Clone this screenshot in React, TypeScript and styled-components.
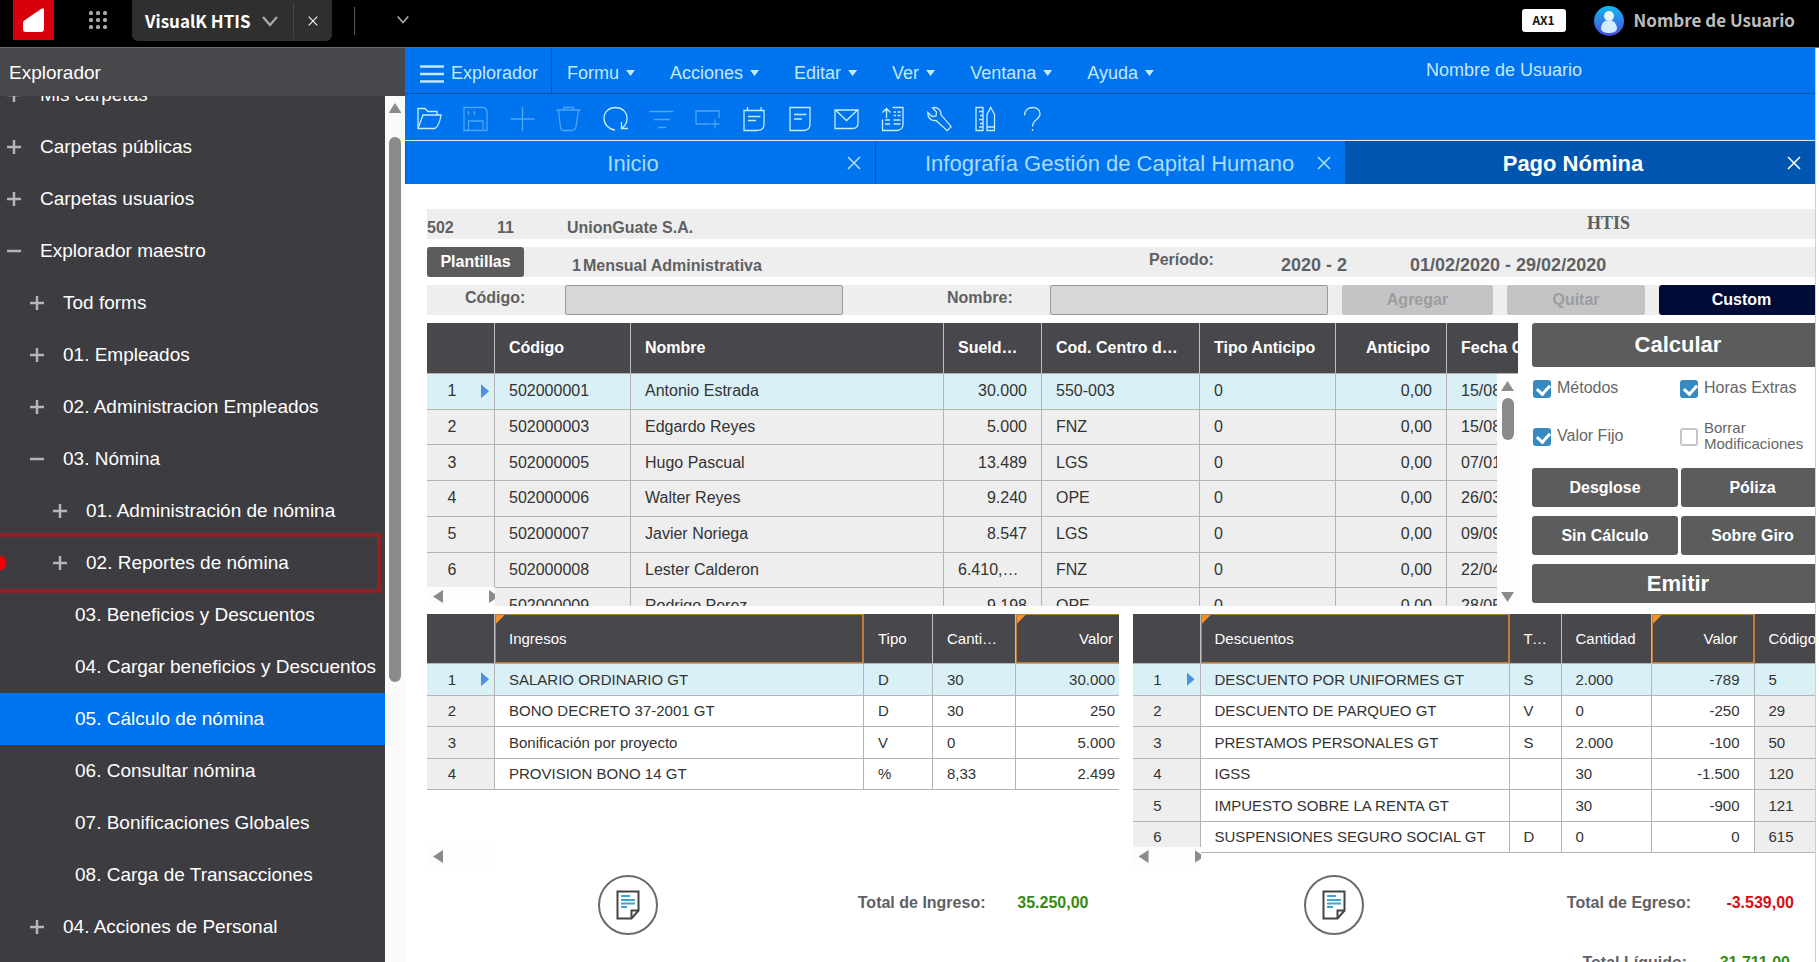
import React from "react";
import styled, { createGlobalStyle, css } from "styled-components";

const GlobalStyle = createGlobalStyle`
  * { box-sizing: border-box; }
  body { margin: 0; background: #fff; font-family: "Liberation Sans", Arial, sans-serif; font-size: 16px; color: #333; }
  button, input { font: inherit; }
  button { border: 0; padding: 0; background: none; color: inherit; cursor: pointer; }
`;

/* ---------- shell ---------- */

const Shell = styled.div`
  display: flex;
  flex-direction: column;
  height: 100vh;
  overflow: hidden;
`;

const TopBar = styled.header`
  display: flex;
  align-items: center;
  flex: none;
  height: 48px;
  padding: 0 24px 0 13px;
  background: #000;
  border-bottom: 1px solid #6b6b6b;
  font-family: "Noto Sans CJK SC", "Noto Sans", sans-serif;
  font-weight: 700;
`;

const Logo = styled.div`
  align-self: flex-start;
  width: 41px;
  height: 40px;
  background: #d9000d;
`;

const AppsButton = styled.button`
  height: 24px;
  margin: -8px 22px 0 32px;
`;

const AppTab = styled.div`
  display: flex;
  align-self: flex-start;
  align-items: center;
  height: 41px;
  background: #2f2f2f;
  border-radius: 0 0 6px 6px;
  color: #fff;
`;

const AppTabName = styled.button`
  display: flex;
  align-items: center;
  justify-content: space-between;
  width: 162px;
  height: 36px;
  padding: 0 15px 0 13px;
  border-right: 1px solid #454545;
  white-space: nowrap;
  font-size: 17px;
`;

const AppTabClose = styled.button`
  display: flex;
  justify-content: center;
  width: 38px;
`;

const TopDivider = styled.div`
  width: 1px;
  height: 28px;
  margin: -6px 42px 0 22px;
  background: #555;
`;

const TopChevron = styled.button`
  height: 12px;
  margin-top: -6px;
  display: flex;
`;

const Badge = styled.span`
  margin: -6px 28px 0 auto;
  width: 44px;
  height: 23px;
  border-radius: 3px;
  background: #fff;
  color: #111;
  text-align: center;
  font-size: 12px;
  line-height: 22px;
`;

const UserName = styled.span`
  margin: -8px 0 0 10px;
  color: #bdbdbd;
  font-size: 17px;
`;

const Avatar = styled.svg`
  margin-top: -5px;
`;

const Body = styled.div`
  display: flex;
  flex: 1;
  min-height: 0;
`;

/* ---------- explorer ---------- */

const Sidebar = styled.aside`
  display: flex;
  flex-direction: column;
  flex: none;
  width: 405px;
  color: #fff;
  font-size: 19px;
`;

const SidebarTitle = styled.h2`
  flex: none;
  height: 48px;
  margin: 0;
  padding-left: 9px;
  background: #48474b;
  font-size: 19px;
  font-weight: 400;
  line-height: 50px;
`;

const SidebarBody = styled.div`
  display: flex;
  flex: 1;
  min-height: 0;
`;

const TreeView = styled.nav`
  position: relative;
  flex: 1;
  overflow: hidden;
  background: #3d3c40;
`;

const Tree = styled.ul`
  list-style: none;
  margin: -27px 0 0;
  padding: 0;
`;

const TreeRow = styled.li<{ $level: number; $leaf?: boolean; $selected?: boolean }>`
  display: flex;
  align-items: center;
  gap: 19px;
  height: 52px;
  padding-left: ${(p) => 7 + p.$level * 23 + (p.$leaf ? 22 : 0)}px;
  background: ${(p) => (p.$selected ? "#0073ee" : "transparent")};
  white-space: nowrap;
`;

const TreeButton = styled.button`
  color: #fff;
`;

const Highlight = styled.div`
  position: absolute;
  left: -4px;
  right: 4px;
  top: 437px;
  height: 60px;
  border: 4px solid #8f2226;
`;

const HighlightDot = styled.div`
  position: absolute;
  left: -7px;
  top: 460px;
  width: 13px;
  height: 14px;
  border-radius: 50%;
  background: #f00000;
  box-shadow: 0 0 2px #f00000;
`;

const VScroll = styled.div<{ $width: number }>`
  display: flex;
  flex-direction: column;
  align-items: center;
  flex: none;
  width: ${(p) => p.$width}px;
  background: #fafafa;
`;

const VThumb = styled.div<{ $height: number }>`
  width: 12px;
  height: ${(p) => p.$height}px;
  margin-top: 7px;
  border-radius: 6px;
  background: #8b8b8b;
`;

const Arrow = styled.span<{ $dir: "up" | "down" | "left" | "right" }>`
  flex: none;
  background: #8b8b8b;
  ${(p) =>
    p.$dir === "up" || p.$dir === "down"
      ? css`width: 13px; height: 10px;`
      : css`width: 10px; height: 13px;`}
  clip-path: ${(p) =>
    ({
      up: "polygon(50% 0, 100% 100%, 0 100%)",
      down: "polygon(0 0, 100% 0, 50% 100%)",
      left: "polygon(0 50%, 100% 0, 100% 100%)",
      right: "polygon(0 0, 100% 50%, 0 100%)",
    })[p.$dir]};
`;

const SidebarArrowBox = styled.div`
  display: flex;
  align-items: flex-end;
  height: 17px;
  margin-bottom: 17px;
`;

/* ---------- workspace ---------- */

const Workspace = styled.main`
  flex: 1;
  min-width: 0;
  margin-right: 3px;
  border-right: 1px solid #cfcfcf;
  overflow: hidden;
  background: #fff;
`;

const MenuBar = styled.nav`
  display: flex;
  height: 46px;
  background: #0073ee;
  border-bottom: 1px solid #0b55ab;
  color: #c5e8ff;
  font-size: 18px;
`;

const ExplorerToggle = styled.button`
  display: flex;
  align-items: center;
  gap: 7px;
  width: 147px;
  padding: 6px 0 0 15px;
  border-right: 1px solid #0b55ab;
`;

const MenuItem = styled.button`
  display: flex;
  align-items: center;
  gap: 7px;
  margin-left: 15px;
  padding: 5px 20px 0 0;
`;

const Caret = styled.span`
  width: 9px;
  height: 6px;
  background: #c5e8ff;
  clip-path: polygon(0 0, 100% 0, 50% 100%);
`;

const MenuUser = styled.span`
  margin-left: auto;
  padding-right: 233px;
  line-height: 45px;
`;

const Toolbar = styled.div`
  height: 47px;
  padding-left: 12px;
  background: #0073ee;
  border-bottom: 1px solid #d5ecff;
`;

const ToolGroup = styled.div`
  display: flex;
  justify-content: space-between;
  align-items: center;
  width: 628px;
  height: 46px;
  padding-top: 3px;
`;

const Tool = styled.button<{ $off?: boolean }>`
  display: flex;
  color: ${(p) => (p.$off ? "#4ba6f8" : "#c6ecff")};
`;

const TabStrip = styled.div`
  display: flex;
  height: 43px;
`;

const DocTab = styled.div<{ $active?: boolean }>`
  display: flex;
  align-items: center;
  flex: 1 1 0;
  min-width: 0;
  background: ${(p) => (p.$active ? "#0055b1" : "#0073ee")};
  color: ${(p) => (p.$active ? "#fff" : "#a9dcff")};
  font-weight: ${(p) => (p.$active ? 700 : 400)};
  border-left: 1px solid #0b55ab;
`;

const DocTabLabel = styled.button`
  flex: 1;
  min-width: 0;
  margin: 0 36px 0 49px;
  padding-top: 2px;
  overflow: visible;
  white-space: nowrap;
  font-size: 22px;
  text-align: center;
`;

const DocTabClose = styled.button`
  display: flex;
  padding-right: 14px;
`;

/* ---------- form ---------- */

const Form = styled.div`
  display: flex;
  flex-direction: column;
  gap: 8px;
  margin-right: -9px;
  padding: 25px 0 0 22px;
`;

const Band = styled.div`
  display: flex;
  align-items: center;
  height: 30px;
  background: #eee;
  color: #5f6063;
  font-weight: 700;
  white-space: nowrap;
`;

const BandText = styled.span<{ $w?: number; $align?: "up" | "down"; $large?: boolean }>`
  flex: none;
  ${(p) => p.$w && css`width: ${p.$w}px;`}
  padding-top: ${(p) => (p.$align === "down" ? (p.$large ? 6 : 8) : 0)}px;
  padding-bottom: ${(p) => (p.$align === "up" ? 4 : 0)}px;
  font-size: ${(p) => (p.$large ? 18 : 16)}px;
`;

const Brand = styled.span`
  width: 237px;
  margin-left: auto;
  padding-bottom: 2px;
  font-family: "Liberation Serif", serif;
  font-size: 18px;
`;

const PeriodGroup = styled.div`
  display: flex;
  align-items: center;
  height: 30px;
  width: 675px;
  margin-left: auto;
`;

const Template = styled.div`
  display: flex;
  gap: 2px;
  margin-left: 48px;
`;

const Field = styled.div<{ $lead: number; $label: number }>`
  display: flex;
  align-items: center;
  margin-left: ${(p) => p.$lead}px;

  label { width: ${(p) => p.$label}px; padding-bottom: 4px; }
`;

const TextBox = styled.input`
  width: 278px;
  height: 30px;
  padding: 0 8px;
  border: 1px solid #989898;
  border-radius: 2px;
  background: #d7d7d7;
`;

const ActionButton = styled.button<{ $kind?: "off" | "navy"; $w?: number; $h?: number; $large?: boolean }>`
  ${(p) => (p.$w ? css`flex: none; width: ${p.$w}px;` : css`flex: 1;`)}
  height: ${(p) => p.$h ?? 30}px;
  border-radius: 3px;
  background: ${(p) => (p.$kind === "off" ? "#c4c4c6" : p.$kind === "navy" ? "#000c35" : "#5c5c5c")};
  color: ${(p) => (p.$kind === "off" ? "#9c9c9f" : "#fff")};
  font-size: ${(p) => (p.$large ? 22 : 16)}px;
  font-weight: 700;
`;

const BandActions = styled.div`
  display: flex;
  gap: 14px;
  flex: 1;
  padding-left: 14px;
`;

/* ---------- grids ---------- */

const Upper = styled.div`
  display: grid;
  grid-template-columns: minmax(0, 1fr) 292px;
  gap: 14px;
  height: 283px;
`;

const GridFrame = styled.div<{ $height: number }>`
  position: relative;
  height: ${(p) => p.$height}px;
  overflow: hidden;
`;

const Grid = styled.table<{ $w: number; $h: number; $size: number; $boldHead?: boolean }>`
  width: ${(p) => p.$w}px;
  height: ${(p) => p.$h}px;
  table-layout: fixed;
  border-collapse: separate;
  border-spacing: 0;
  font-size: ${(p) => p.$size}px;

  thead tr { height: ${(p) => (p.$boldHead ? 51 : 50)}px; }
  th { font-weight: ${(p) => (p.$boldHead ? 700 : 400)}; }
`;

const cell = css<{ $right?: boolean }>`
  overflow: hidden;
  padding: 0 14px;
  border-right: 1px solid #b4b4b4;
  text-align: ${(p) => (p.$right ? "right" : "left")};
  text-overflow: ellipsis;
  white-space: nowrap;
`;

const Th = styled.th<{ $right?: boolean; $marked?: boolean }>`
  ${cell}
  padding-right: ${(p) => (p.$right ? 16 : 14)}px;
  background: #48474b;
  color: #fff;
  border-right-color: #bdbdbd;
  border-bottom: 1px solid #b4b4b4;
  ${(p) =>
    p.$marked &&
    css`
      border-right-color: #bf7b38;
      border-bottom-color: #c9a27c;
      box-shadow: inset 0 0 0 1px #bf7b38;
      background: linear-gradient(135deg, #f7922b 7px, #48474b 8px);
    `}
`;

const HeadCorner = styled.td`
  background: #48474b;
  border-right: 1px solid #bdbdbd;
  border-bottom: 1px solid #b4b4b4;
`;

const Td = styled.td<{ $right?: boolean; $bg: string }>`
  ${cell}
  background: ${(p) => p.$bg};
  border-bottom: 1px solid #b4b4b4;
  color: #333;
`;

const NumCell = styled.td<{ $bg: string }>`
  padding: 0;
  background: ${(p) => p.$bg};
  border-right: 1px solid #b4b4b4;
  border-bottom: 1px solid #b4b4b4;
`;

const NumInner = styled.div`
  display: flex;
  align-items: center;
  justify-content: space-between;
  padding-right: 5px;
`;

const Num = styled.span`
  width: 50px;
  text-align: center;
`;

const Pointer = styled.span`
  width: 8px;
  height: 14px;
  background: #4c92e2;
  clip-path: polygon(0 0, 100% 50%, 0 100%);
`;

const HScroll = styled.div`
  position: absolute;
  left: 0;
  bottom: 0;
  display: flex;
  align-items: center;
  gap: 46px;
  width: 68px;
  height: 19px;
  padding-left: 6px;
  overflow: hidden;
  background: #fdfdfd;
`;

const GridVScroll = styled.div`
  position: absolute;
  right: 0;
  top: 51px;
  bottom: 0;
  display: flex;
  flex-direction: column;
  align-items: center;
  width: 21px;
  padding: 7px 0 4px;
  background: #fdfdfd;

  ${Arrow}:last-child { margin-top: auto; }
`;

/* ---------- right panel ---------- */

const Panel = styled.div`
  display: flex;
  flex-direction: column;
`;

const ButtonRow = styled.div`
  display: flex;
  gap: 3px;

  & + & { margin-top: 9px; }
`;

const Checks = styled.div`
  display: grid;
  grid-template-columns: 147px 1fr;
  grid-template-rows: 48px 48px;
  align-items: center;
  margin: -2px 0 7px 1px;
`;

const CheckItem = styled.div<{ $small?: boolean }>`
  display: flex;
  align-items: center;
  gap: 6px;
  color: #666;

  label {
    font-size: ${(p) => (p.$small ? 15 : 16)}px;
    line-height: 16px;
    padding-bottom: 2px;
  }
`;

const CheckBox = styled.input`
  position: relative;
  appearance: none;
  flex: none;
  width: 18px;
  height: 18px;
  margin: 0;
  border: 2px solid #c6c6c6;
  border-radius: 3px;
  background: #fff;

  &:checked { border-color: #3789c2; background: #3789c2; }
  &:checked::after {
    content: "";
    position: absolute;
    left: 4px;
    top: 0;
    width: 6px;
    height: 10px;
    border: solid #fff;
    border-width: 0 3px 3px 0;
    transform: rotate(42deg);
  }
`;

/* ---------- lower part ---------- */

const Lower = styled.div`
  display: grid;
  grid-template-columns: minmax(0, 1fr) minmax(0, 1fr);
  column-gap: 14px;
`;

const Summary = styled.div`
  display: flex;
  align-items: center;
  padding: 0 30px 0 171px;
  height: 78px;
`;

const NoteButton = styled.button`
  display: flex;
  align-items: center;
  justify-content: center;
  width: 60px;
  height: 60px;
  border: 2px solid #6b6b6b;
  border-radius: 50%;
`;

const Totals = styled.dl`
  display: flex;
  justify-content: flex-end;
  flex: 1;
  margin: 0;
  padding-bottom: 4px;
  font-weight: 700;
`;

const TotalLabel = styled.dt`
  color: #5f6063;
`;

const TotalValue = styled.dd<{ $negative?: boolean }>`
  width: 103px;
  margin: 0;
  text-align: right;
  color: ${(p) => (p.$negative ? "#d90d12" : "#368a12")};
`;

const NetTotal = styled.div`
  grid-column: 2;
  display: flex;
  padding-right: 34px;
  margin-top: 10px;
`;

/* ---------- icons ---------- */

const iconPaths: Record<string, React.ReactNode> = {
  folder: <path d="M.5 21V1.500h7l3 3h9v4M.5 21.500h17c3-2 5-7 6-13.500H5.500L.5 21.500z" />,
  save: <path d="M.5.500h18c3 0 5 2 5 5v18H.5V.500zM5 4v4M11 4v4M5 23V14h14.500v9.500" />,
  plus: <path d="M12 0v24M0 12h24" />,
  trash: <path d="M0 3h24M7.500 3V.500h9.500V3M2 3.500l2 17c.3 2 1.500 3 3 3h8c2.500 0 4-1 4.500-4l2.500-16" />,
  refresh: <path d="M11.500 23C5.500 22.500.5 17.500.5 11.500.5 5 5.500.500 12 .500S23.500 5 23.500 11.500c0 4-2 7.500-5 9.500M18 15v6.500h6.500" />,
  filter: <path d="M0 4.500h24M4 12.500h16.500M8.500 20.500h8" />,
  addWindow: <path d="M23.500 11V4H.5v13H14M19.500 12.500v9M15 17h9" />,
  notes: <path d="M1.500 3.500h20V17c0 4-2.500 6.500-7 6.500h-13V3.500zM5 0v3.500M18.500 0v3.500M5.500 9.500h12.500M5.500 13.500h8" />,
  note: <path d="M1.500.500h20V17c0 4-2.500 6.500-7 6.500h-13V.500zM5.500 7.500h12.500M5.500 12h8" />,
  mail: <path d="M.5 3h23v13c0 3.500-2 5.500-5.500 5.500H.5V3zM1 3l11 10.500L23 3" />,
  sheet: <path d="M11 .500h10.500V17c0 4-2.500 6.500-7 6.500H1V12.500M5 11V1.500M1 5.500l4-4 4 4M12 5h2.500M16 5h3M12 8.500h2.500M16 8.500h3M3.500 13h5M12 13h7M3.500 17h5M12 17h7" />,
  wrench: <path d="M5 .800c4.500-1.300 9 2 8.500 7L23.700 19.700l-4 4L8.500 13.500C3.500 14.500 0 10.500.300 5.500l4.200 4 4-.500.500-4z" />,
  rulers: <path d="M1.500.500h7v23h-7zM4.500 4.500h4M5.500 8.500h3M4.500 12.500h4M5.500 16.500h3M4.500 20h4M12.500 23.500V7.500L16.200.500l3.800 7v16zM12.500 20h7.500" />,
  help: <path d="M4 8.500C4 3.500 7.500.500 12 .500s7.500 2.500 7.500 6.500c0 6-7.500 5-7.500 12.500M12 22v2" />,
};

const Icon = ({ name }: { name: string }) => (
  <svg width="25" height="26" viewBox="-0.500 -1 25 26" fill="none" stroke="currentColor" strokeWidth="1.300" aria-hidden="true">
    {iconPaths[name]}
  </svg>
);

const Cross = ({ size, color }: { size: number; color: string }) => (
  <svg width={size} height={size} viewBox="0 0 14 14" stroke={color} strokeWidth="1.500" aria-hidden="true">
    <path d="M1 1l12 12M13 1L1 13" />
  </svg>
);

const Chevron = ({ w }: { w: number }) => (
  <svg width={w} height={w * 0.75} viewBox="0 0 16 12" fill="none" stroke="#aaa" strokeWidth="2.200" aria-hidden="true">
    <path d="M1 2l7 8 7-8" />
  </svg>
);

const NoteIcon = () => (
  <svg width="24" height="30" viewBox="0 0 24 30" fill="none" aria-hidden="true">
    <path d="M1.500 1.500h21v19l-7 8h-14v-27z" stroke="#444" strokeWidth="2" />
    <path d="M15.500 28v-7.500h7" stroke="#444" strokeWidth="2" />
    <path d="M5 6h9M5 10h14M5 13.500h14M5 17h6" stroke="#38a9d4" strokeWidth="2" />
  </svg>
);

const Expander = ({ open }: { open: boolean }) => (
  <svg width="14" height="14" viewBox="0 0 14 14" stroke="#b5b5b7" strokeWidth="2.500" aria-hidden="true">
    <path d={open ? "M0 7h14" : "M0 7h14M7 0v14"} />
  </svg>
);

/* ---------- data ---------- */

type Node = { label: string; level: number; kind: "open" | "closed" | "leaf"; selected?: boolean };

const tree: Node[] = [
  { label: "Mis carpetas", level: 0, kind: "closed" },
  { label: "Carpetas públicas", level: 0, kind: "closed" },
  { label: "Carpetas usuarios", level: 0, kind: "closed" },
  { label: "Explorador maestro", level: 0, kind: "open" },
  { label: "Tod forms", level: 1, kind: "closed" },
  { label: "01. Empleados", level: 1, kind: "closed" },
  { label: "02. Administracion Empleados", level: 1, kind: "closed" },
  { label: "03. Nómina", level: 1, kind: "open" },
  { label: "01. Administración de nómina", level: 2, kind: "closed" },
  { label: "02. Reportes de nómina", level: 2, kind: "closed" },
  { label: "03. Beneficios y Descuentos", level: 2, kind: "leaf" },
  { label: "04. Cargar beneficios y Descuentos", level: 2, kind: "leaf" },
  { label: "05. Cálculo de nómina", level: 2, kind: "leaf", selected: true },
  { label: "06. Consultar nómina", level: 2, kind: "leaf" },
  { label: "07. Bonificaciones Globales", level: 2, kind: "leaf" },
  { label: "08. Carga de Transacciones", level: 2, kind: "leaf" },
  { label: "04. Acciones de Personal", level: 1, kind: "closed" },
];

const tools: [string, string, boolean?][] = [
  ["folder", "Abrir"],
  ["save", "Guardar", true],
  ["plus", "Nuevo", true],
  ["trash", "Eliminar", true],
  ["refresh", "Actualizar"],
  ["filter", "Filtrar", true],
  ["addWindow", "Agregar ventana", true],
  ["notes", "Agenda"],
  ["note", "Nota"],
  ["mail", "Correo"],
  ["sheet", "Exportar"],
  ["wrench", "Herramientas"],
  ["rulers", "Diseño"],
  ["help", "Ayuda"],
];

type Column = { title: string; width: number; right?: boolean; marked?: boolean; shaded?: boolean };

const employeeColumns: Column[] = [
  { title: "Código", width: 136 },
  { title: "Nombre", width: 313 },
  { title: "Sueldo Base", width: 98, right: true },
  { title: "Cod. Centro de Costo", width: 158 },
  { title: "Tipo Anticipo", width: 136 },
  { title: "Anticipo", width: 111, right: true },
  { title: "Fecha Contrato", width: 160 },
];

const employees = [
  ["502000001", "Antonio Estrada", "30.000", "550-003", "0", "0,00", "15/08/2016"],
  ["502000003", "Edgardo Reyes", "5.000", "FNZ", "0", "0,00", "15/08/2016"],
  ["502000005", "Hugo Pascual", "13.489", "LGS", "0", "0,00", "07/01/2016"],
  ["502000006", "Walter Reyes", "9.240", "OPE", "0", "0,00", "26/03/2016"],
  ["502000007", "Javier Noriega", "8.547", "LGS", "0", "0,00", "09/09/2016"],
  ["502000008", "Lester Calderon", "6.410,256", "FNZ", "0", "0,00", "22/04/2016"],
  ["502000009", "Rodrigo Perez", "9.198", "OPE", "0", "0,00", "28/05/2016"],
];

const incomeColumns: Column[] = [
  { title: "Ingresos", width: 369, marked: true },
  { title: "Tipo", width: 69 },
  { title: "Cantidad", width: 83 },
  { title: "Valor", width: 114, right: true, marked: true },
];

const incomes = [
  ["SALARIO ORDINARIO GT", "D", "30", "30.000"],
  ["BONO DECRETO 37-2001 GT", "D", "30", "250"],
  ["Bonificación por proyecto", "V", "0", "5.000"],
  ["PROVISION BONO 14 GT", "%", "8,33", "2.499"],
];

const deductionColumns: Column[] = [
  { title: "Descuentos", width: 309, marked: true },
  { title: "Tipo", width: 52 },
  { title: "Cantidad", width: 90 },
  { title: "Valor", width: 103, right: true, marked: true },
  { title: "Código", width: 90, shaded: true },
];

const deductions = [
  ["DESCUENTO POR UNIFORMES GT", "S", "2.000", "-789", "5"],
  ["DESCUENTO DE PARQUEO GT", "V", "0", "-250", "29"],
  ["PRESTAMOS PERSONALES GT", "S", "2.000", "-100", "50"],
  ["IGSS", "", "30", "-1.500", "120"],
  ["IMPUESTO SOBRE LA RENTA GT", "", "30", "-900", "121"],
  ["SUSPENSIONES SEGURO SOCIAL GT", "D", "0", "0", "615"],
];

const SELECTED = "#d9f0f7";
const SHADED = "#eeeeee";

type DataGridProps = { columns: Column[]; rows: string[][]; height: number; size: number; boldHead?: boolean; shaded?: boolean };

const DataGrid = ({ columns, rows, height, size, boldHead, shaded }: DataGridProps) => {
  const width = columns.reduce((sum, c) => sum + c.width, 68);
  return (
    <Grid $w={width} $h={height} $size={size} $boldHead={boldHead}>
      <colgroup>
        <col width={68} />
        {columns.map((c) => (
          <col key={c.title} width={c.width} />
        ))}
      </colgroup>
      <thead>
        <tr>
          <HeadCorner />
          {columns.map((c) => (
            <Th key={c.title} scope="col" $right={c.right} $marked={c.marked}>
              {c.title}
            </Th>
          ))}
        </tr>
      </thead>
      <tbody>
        {rows.map((row, i) => (
          <tr key={i}>
            <NumCell $bg={i === 0 ? SELECTED : SHADED}>
              <NumInner>
                <Num>{i + 1}</Num>
                {i === 0 && <Pointer />}
              </NumInner>
            </NumCell>
            {row.map((value, j) => (
              <Td key={j} $right={columns[j].right} $bg={i === 0 ? SELECTED : shaded || columns[j].shaded ? SHADED : "#fff"}>
                {value}
              </Td>
            ))}
          </tr>
        ))}
      </tbody>
    </Grid>
  );
};

export default function App() {
  return (
    <Shell>
      <GlobalStyle />
      <TopBar>
        <Logo>
          <svg width="41" height="40" viewBox="0 0 41 40" aria-hidden="true">
            <path d="M10 23q0-2 2-3L28 9q3-2 3 1v19q0 3-3 3H13q-3 0-3-3z" fill="#fff" />
          </svg>
        </Logo>
        <AppsButton aria-label="Aplicaciones">
          <svg width="24" height="24" viewBox="0 0 24 24" fill="#a8a8a8" aria-hidden="true">
            {[5, 12, 19].map((y) => [5, 12, 19].map((x) => <rect key={x + "-" + y} x={x - 2} y={y - 2} width="4" height="4" rx="1.500" />))}
          </svg>
        </AppsButton>
        <AppTab>
          <AppTabName>
            VisualK HTIS <Chevron w={16} />
          </AppTabName>
          <AppTabClose aria-label="Cerrar">
            <Cross size={10} color="#fff" />
          </AppTabClose>
        </AppTab>
        <TopDivider />
        <TopChevron aria-label="Más">
          <Chevron w={12} />
        </TopChevron>
        <Badge>AX1</Badge>
        <Avatar width="30" height="30" viewBox="0 0 30 30" aria-hidden="true">
          <defs>
            <linearGradient id="ring" x1="0" y1="0" x2="0" y2="1">
              <stop offset="0" stopColor="#12b9f2" />
              <stop offset="1" stopColor="#4a4be0" />
            </linearGradient>
          </defs>
          <circle cx="15" cy="15" r="15" fill="url(#ring)" />
          <circle cx="15" cy="10" r="5" fill="#e6f4ff" />
          <path d="M7 23c0-5 3-9 8-9s8 4 8 9c-1 3-4 4-8 4s-7-1-8-4z" fill="#d3eaff" />
        </Avatar>
        <UserName>Nombre de Usuario</UserName>
      </TopBar>

      <Body>
        <Sidebar>
          <SidebarTitle>Explorador</SidebarTitle>
          <SidebarBody>
            <TreeView aria-label="Explorador">
              <Tree>
                {tree.map((n) => (
                  <TreeRow key={n.label} $level={n.level} $leaf={n.kind === "leaf"} $selected={n.selected}>
                    {n.kind !== "leaf" && <Expander open={n.kind === "open"} />}
                    <TreeButton>{n.label}</TreeButton>
                  </TreeRow>
                ))}
              </Tree>
              <Highlight />
              <HighlightDot />
            </TreeView>
            <VScroll $width={20}>
              <SidebarArrowBox>
                <Arrow $dir="up" />
              </SidebarArrowBox>
              <VThumb $height={545} />
            </VScroll>
          </SidebarBody>
        </Sidebar>

        <Workspace>
          <MenuBar>
            <ExplorerToggle>
              <svg width="24" height="18" viewBox="0 0 24 18" stroke="currentColor" strokeWidth="2.500" aria-hidden="true">
                <path d="M0 1.500h24M0 9h24M0 16.500h24" />
              </svg>
              Explorador
            </ExplorerToggle>
            {["Formu", "Acciones", "Editar", "Ver", "Ventana", "Ayuda"].map((m) => (
              <MenuItem key={m}>
                {m} <Caret />
              </MenuItem>
            ))}
            <MenuUser>Nombre de Usuario</MenuUser>
          </MenuBar>
          <Toolbar>
            <ToolGroup>
              {tools.map(([name, label, off]) => (
                <Tool key={name} aria-label={label} $off={off}>
                  <Icon name={name} />
                </Tool>
              ))}
            </ToolGroup>
          </Toolbar>
          <TabStrip>
            {["Inicio", "Infografía Gestión de Capital Humano", "Pago Nómina"].map((t, i) => (
              <DocTab key={t} $active={i === 2}>
                <DocTabLabel>{t}</DocTabLabel>
                <DocTabClose aria-label="Cerrar">
                  <Cross size={14} color={i === 2 ? "#fff" : "#b5e1ff"} />
                </DocTabClose>
              </DocTab>
            ))}
          </TabStrip>

          <Form>
            <Band>
              <BandText $w={70} $align="down">502</BandText>
              <BandText $w={70} $align="down">11</BandText>
              <BandText $align="down">UnionGuate S.A.</BandText>
              <Brand>HTIS</Brand>
            </Band>
            <Band>
              <ActionButton $w={97}>Plantillas</ActionButton>
              <Template>
                <BandText $align="down">1</BandText>
                <BandText $align="down">Mensual Administrativa</BandText>
              </Template>
              <PeriodGroup>
                <BandText $w={132} $align="up">Período:</BandText>
                <BandText $w={129} $align="down" $large>2020 - 2</BandText>
                <BandText $align="down" $large>01/02/2020 - 29/02/2020</BandText>
              </PeriodGroup>
            </Band>
            <Band>
              <Field $lead={38} $label={100}>
                <label htmlFor="codigo">Código:</label>
                <TextBox id="codigo" />
              </Field>
              <Field $lead={104} $label={103}>
                <label htmlFor="nombre">Nombre:</label>
                <TextBox id="nombre" />
              </Field>
              <BandActions>
                <ActionButton $w={151} $kind="off">Agregar</ActionButton>
                <ActionButton $w={138} $kind="off">Quitar</ActionButton>
                <ActionButton $kind="navy">Custom</ActionButton>
              </BandActions>
            </Band>

            <Upper>
              <GridFrame $height={283}>
                <DataGrid columns={employeeColumns} rows={employees} height={301} size={16} boldHead shaded />
                <GridVScroll>
                  <Arrow $dir="up" />
                  <VThumb $height={42} />
                  <Arrow $dir="down" />
                </GridVScroll>
                <HScroll>
                  <Arrow $dir="left" />
                  <Arrow $dir="right" />
                </HScroll>
              </GridFrame>
              <Panel>
                <ButtonRow>
                  <ActionButton $h={44} $large>Calcular</ActionButton>
                </ButtonRow>
                <Checks>
                  <CheckItem>
                    <CheckBox type="checkbox" id="metodos" defaultChecked />
                    <label htmlFor="metodos">Métodos</label>
                  </CheckItem>
                  <CheckItem>
                    <CheckBox type="checkbox" id="horas" defaultChecked />
                    <label htmlFor="horas">Horas Extras</label>
                  </CheckItem>
                  <CheckItem>
                    <CheckBox type="checkbox" id="fijo" defaultChecked />
                    <label htmlFor="fijo">Valor Fijo</label>
                  </CheckItem>
                  <CheckItem $small>
                    <CheckBox type="checkbox" id="borrar" />
                    <label htmlFor="borrar">
                      Borrar
                      <br />
                      Modificaciones
                    </label>
                  </CheckItem>
                </Checks>
                <ButtonRow>
                  <ActionButton $w={146} $h={39}>Desglose</ActionButton>
                  <ActionButton $h={39}>Póliza</ActionButton>
                </ButtonRow>
                <ButtonRow>
                  <ActionButton $w={146} $h={39}>Sin Cálculo</ActionButton>
                  <ActionButton $h={39}>Sobre Giro</ActionButton>
                </ButtonRow>
                <ButtonRow>
                  <ActionButton $h={39} $large>Emitir</ActionButton>
                </ButtonRow>
              </Panel>
            </Upper>

            <Lower>
              <GridFrame $height={252}>
                <DataGrid columns={incomeColumns} rows={incomes} height={176} size={15} />
                <HScroll>
                  <Arrow $dir="left" />
                </HScroll>
              </GridFrame>
              <GridFrame $height={252}>
                <DataGrid columns={deductionColumns} rows={deductions} height={239} size={15} />
                <HScroll>
                  <Arrow $dir="left" />
                  <Arrow $dir="right" />
                </HScroll>
              </GridFrame>
              <Summary>
                <NoteButton aria-label="Nota de ingresos">
                  <NoteIcon />
                </NoteButton>
                <Totals>
                  <TotalLabel>Total de Ingreso:</TotalLabel>
                  <TotalValue>35.250,00</TotalValue>
                </Totals>
              </Summary>
              <Summary>
                <NoteButton aria-label="Nota de egresos">
                  <NoteIcon />
                </NoteButton>
                <Totals>
                  <TotalLabel>Total de Egreso:</TotalLabel>
                  <TotalValue $negative>-3.539,00</TotalValue>
                </Totals>
              </Summary>
              <NetTotal>
                <Totals>
                  <TotalLabel>Total Líquido:</TotalLabel>
                  <TotalValue>31.711,00</TotalValue>
                </Totals>
              </NetTotal>
            </Lower>
          </Form>
        </Workspace>
      </Body>
    </Shell>
  );
}
